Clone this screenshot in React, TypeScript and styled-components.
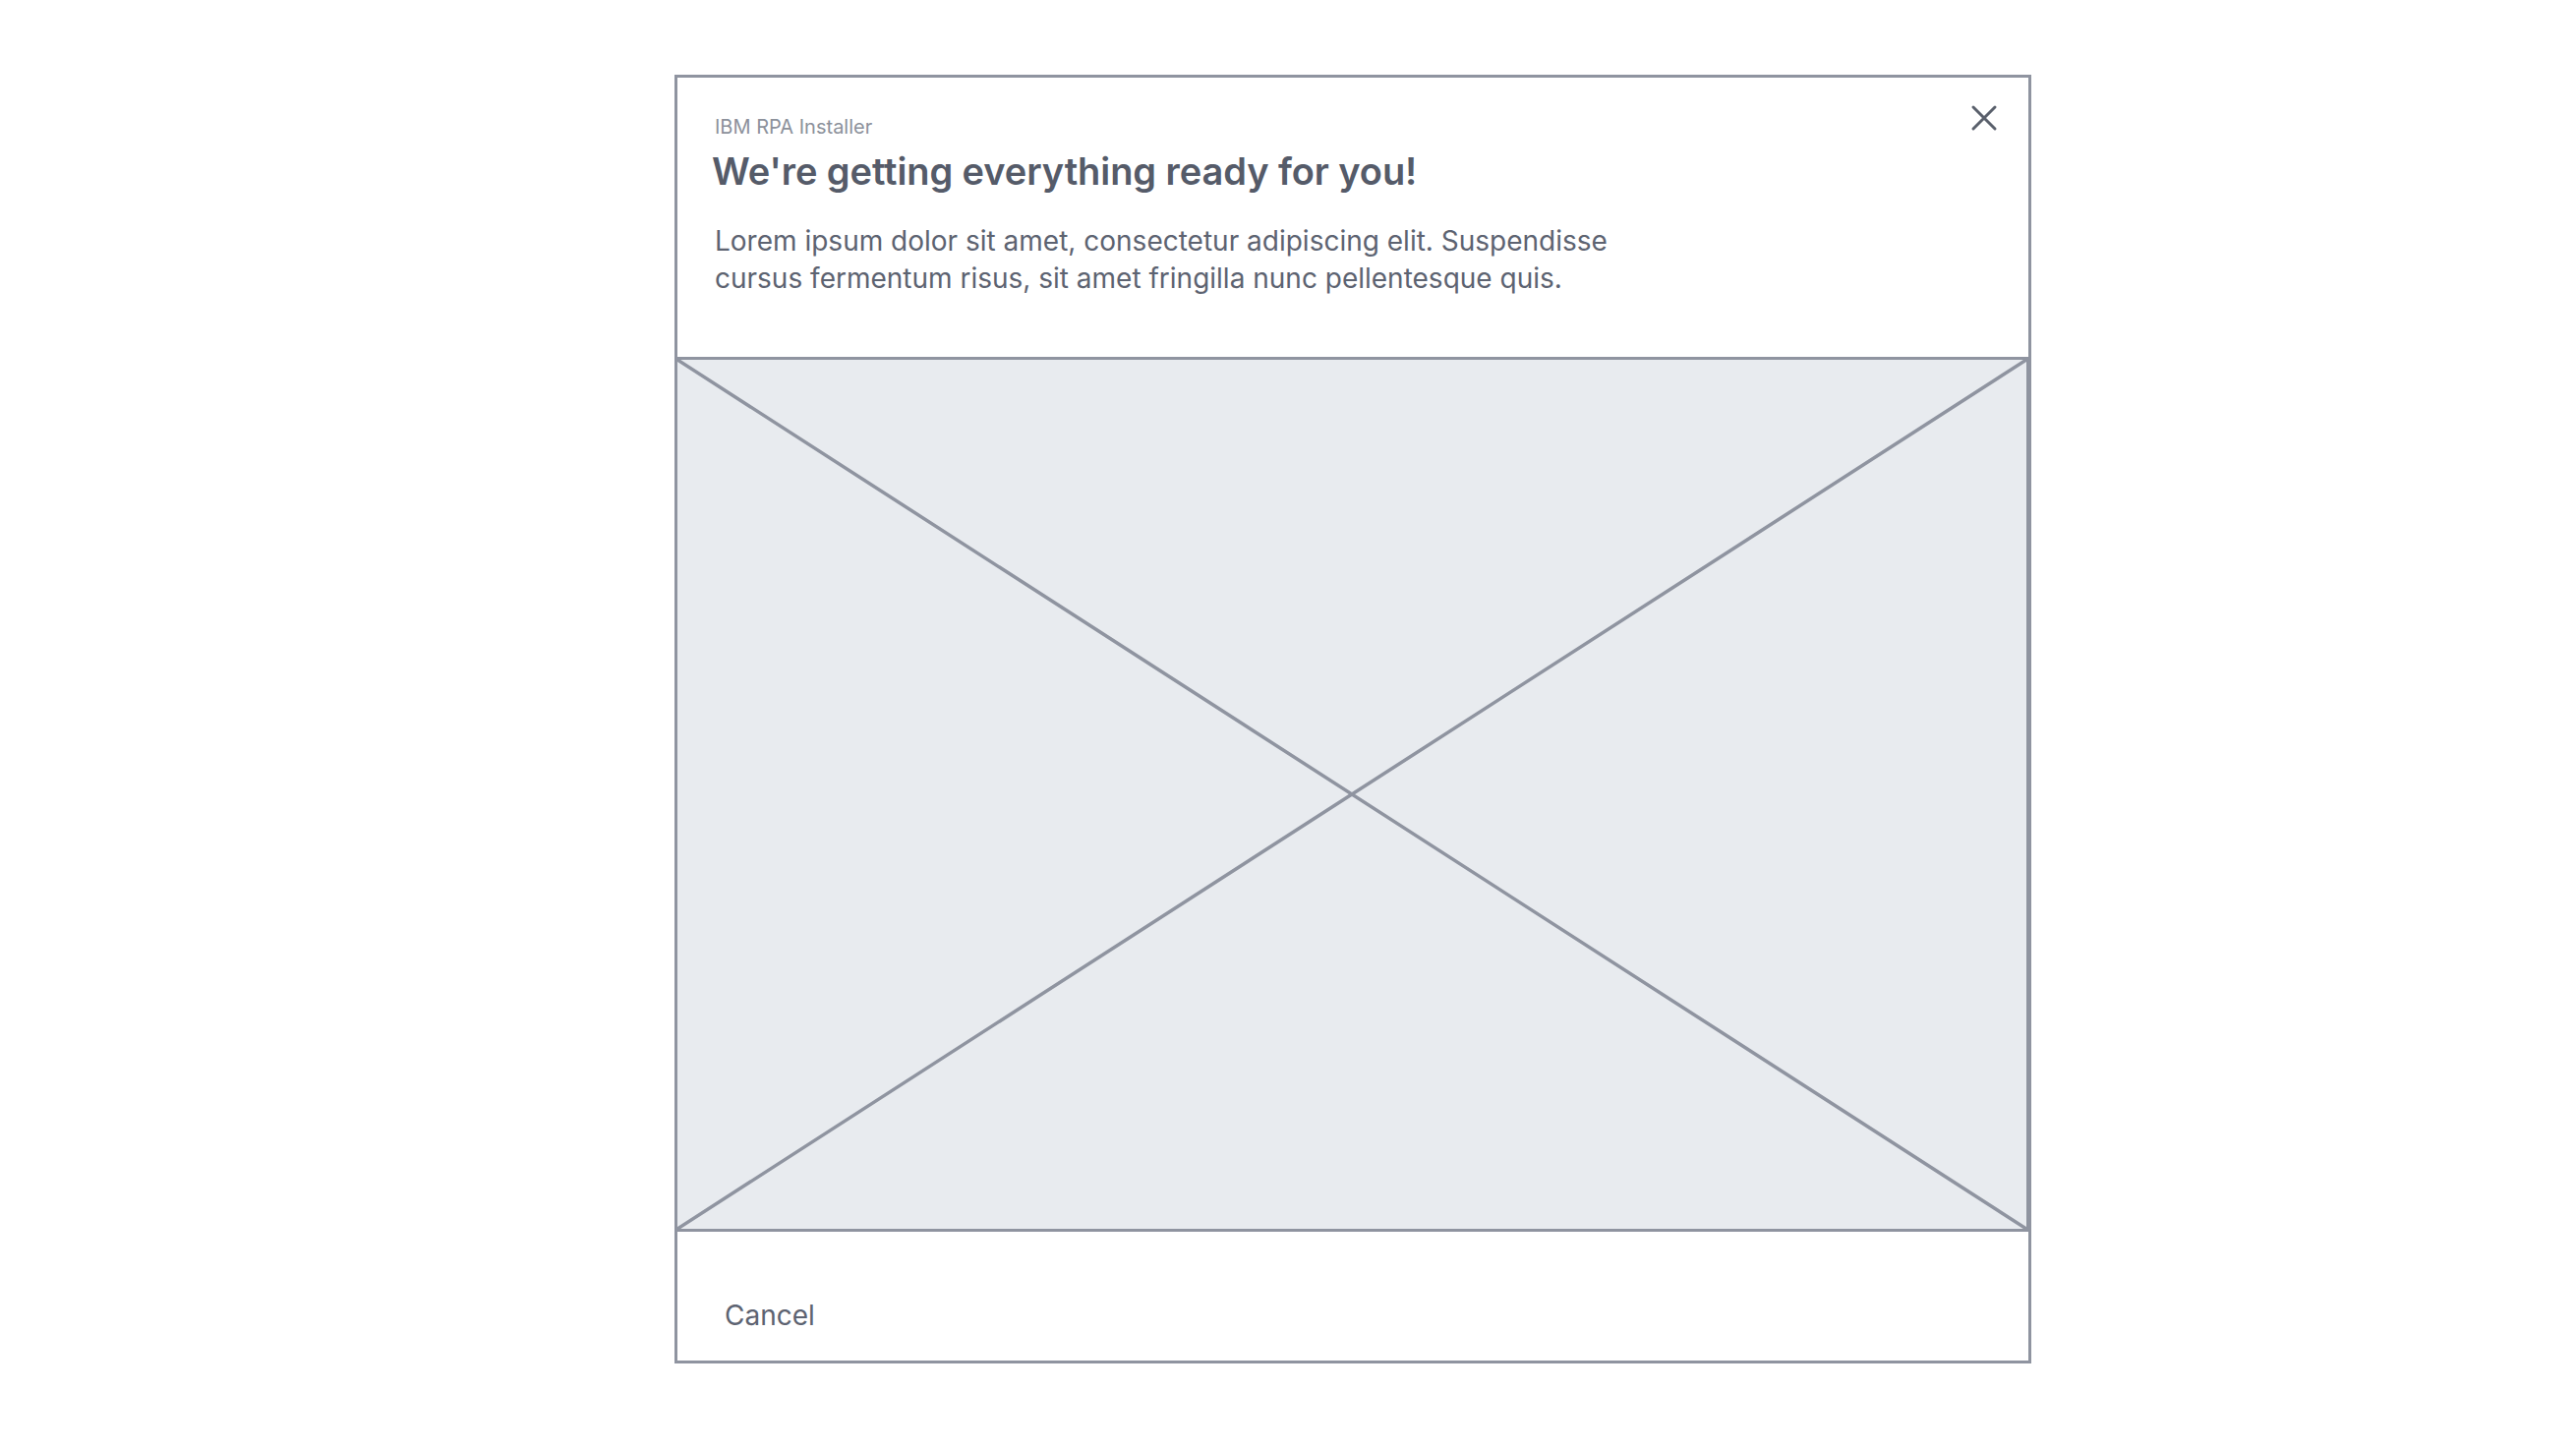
import React from 'react';
import styled, { createGlobalStyle } from 'styled-components';

const GlobalStyle = createGlobalStyle`
  html, body {
    margin: 0;
    padding: 0;
    background: #ffffff;
    font-family: Inter, "Noto Sans", "Liberation Sans", sans-serif;
  }
`;

const palette = {
  line: '#8f94a0',
  fill: '#e8ebef',
  ink: '#555b69',
  body: '#5d6371',
  muted: '#8c919b',
};

const Page = styled.div`
  width: 2620px;
  height: 1474px;
  box-sizing: border-box;
  padding: 76px 0 0 686px;
`;

const Dialog = styled.section`
  position: relative;
  width: 1380px;
  height: 1311px;
  box-sizing: border-box;
  border: 3px solid ${palette.line};
  background: #fff;
  display: flex;
  flex-direction: column;
`;

const Header = styled.header`
  padding: 38px 36px 0 38px;
  height: 284px;
  box-sizing: border-box;
`;

const Label = styled.div`
  font-size: 20px;
  line-height: 24px;
  color: ${palette.muted};
`;

const Title = styled.h1`
  margin: 10px 0 0 -3px;
  font-size: 38px;
  line-height: 46px;
  font-weight: 600;
  color: ${palette.ink};
  letter-spacing: -0.08px;
`;

const Body = styled.p`
  margin: 29px 0 0;
  width: 980px;
  font-size: 28px;
  line-height: 38px;
  color: ${palette.body};
`;

const CloseButton = styled.button`
  position: absolute;
  top: 23px;
  right: 27px;
  width: 36px;
  height: 36px;
  padding: 0;
  border: none;
  background: transparent;
  display: flex;
  align-items: center;
  justify-content: center;
  cursor: pointer;
`;

const Placeholder = styled.div`
  margin: 0 -1px 0 -3px;
  height: 890px;
  box-sizing: border-box;
  border: 3px solid ${palette.line};
  background: ${palette.fill};

  svg {
    display: block;
    width: 100%;
    height: 100%;
  }
`;

const Footer = styled.footer`
  flex: 1;
  display: flex;
  align-items: flex-end;
  padding: 0 0 29px 48px;
`;

const TextButton = styled.button`
  border: none;
  background: transparent;
  padding: 0;
  font-family: inherit;
  font-size: 28px;
  line-height: 34px;
  color: ${palette.body};
  cursor: pointer;
`;

const App = () => {
  return (
    <>
      <GlobalStyle />
      <Page>
        <Dialog>
          <CloseButton aria-label="Close">
            <svg width="28" height="28" viewBox="0 0 28 28">
              <path
                d="M3 3 L25 25 M25 3 L3 25"
                stroke="#5a606c"
                strokeWidth="3"
                strokeLinecap="round"
              />
            </svg>
          </CloseButton>
          <Header>
            <Label>IBM RPA Installer</Label>
            <Title>We're getting everything ready for you!</Title>
            <Body>
              Lorem ipsum dolor sit amet, consectetur adipiscing elit. Suspendisse
              cursus fermentum risus, sit amet fringilla nunc pellentesque quis.
            </Body>
          </Header>
          <Placeholder>
            <svg viewBox="0 0 100 100" preserveAspectRatio="none">
              <path
                d="M0 0 L100 100 M100 0 L0 100"
                stroke={palette.line}
                strokeWidth="3.5"
                fill="none"
                vectorEffect="non-scaling-stroke"
              />
            </svg>
          </Placeholder>
          <Footer>
            <TextButton>Cancel</TextButton>
          </Footer>
        </Dialog>
      </Page>
    </>
  );
};

export default App;
